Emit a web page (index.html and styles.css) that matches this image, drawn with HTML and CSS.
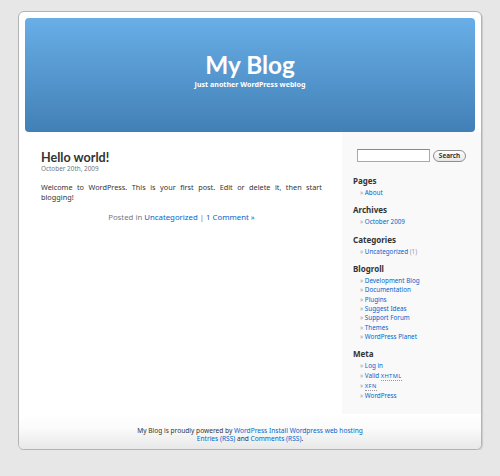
FILE: index.html
```html
<!DOCTYPE html>
<html lang="en">
<head>
<meta charset="utf-8">
<title>My Blog</title>
<link rel="stylesheet" href="styles.css">
</head>
<body>
<div class="page">
  <div class="header-wrap">
    <div class="header">
      <h1 class="site-title">My Blog</h1>
      <div class="site-desc">Just another WordPress weblog</div>
    </div>
  </div>
  <div class="content">
    <div class="main">
      <div class="post">
        <h2 class="post-title">Hello world!</h2>
        <div class="post-date">October 20th, 2009</div>
        <p class="entry">Welcome to WordPress. This is your first post. Edit or delete it, then start blogging!</p>
        <p class="postmeta">Posted in <a href="#">Uncategorized</a> | <a href="#">1 Comment »</a></p>
      </div>
    </div>
    <div class="sidebar">
      <form class="search">
        <input class="search-input" type="text">
        <button class="search-btn" type="button">Search</button>
      </form>
      <div class="widget">
        <h2 class="widget-title">Pages</h2>
        <ul class="links"><li><a href="#">About</a></li></ul>
      </div>
      <div class="widget">
        <h2 class="widget-title">Archives</h2>
        <ul class="links"><li><a href="#">October 2009</a></li></ul>
      </div>
      <div class="widget">
        <h2 class="widget-title">Categories</h2>
        <ul class="links"><li><a href="#">Uncategorized</a> <span class="count">(1)</span></li></ul>
      </div>
      <div class="widget">
        <h2 class="widget-title">Blogroll</h2>
        <ul class="links">
          <li><a href="#">Development Blog</a></li>
          <li><a href="#">Documentation</a></li>
          <li><a href="#">Plugins</a></li>
          <li><a href="#">Suggest Ideas</a></li>
          <li><a href="#">Support Forum</a></li>
          <li><a href="#">Themes</a></li>
          <li><a href="#">WordPress Planet</a></li>
        </ul>
      </div>
      <div class="widget">
        <h2 class="widget-title">Meta</h2>
        <ul class="links">
          <li><a href="#">Log in</a></li>
          <li><a href="#">Valid <abbr class="abbr">XHTML</abbr></a></li>
          <li><a href="#"><abbr class="abbr">XFN</abbr></a></li>
          <li><a href="#">WordPress</a></li>
        </ul>
      </div>
    </div>
  </div>
  <div class="footer">
    <p class="footer-text">My Blog is proudly powered by <a href="#">WordPress</a> <a href="#">Install Wordpress</a> <a href="#">web hosting</a><br><a href="#">Entries (RSS)</a> and <a href="#">Comments (RSS)</a>.</p>
  </div>
</div>
</body>
</html>
```
FILE: styles.css
```css
html, body {
  margin: 0;
  padding: 0;
}
body {
  background: #e7e7e7;
  font-family: "Noto Sans", "DejaVu Sans", sans-serif;
  color: #333;
  padding-top: 11px;
}
a {
  color: #0066cc;
  text-decoration: none;
}
.page {
  width: 464px;
  height: 439px;
  box-sizing: border-box;
  margin: 0 auto;
  background: #fff;
  border: 1px solid #b3b3b3;
  border-radius: 6px;
  box-shadow: 1px 1px 1px rgba(0, 0, 0, 0.12);
  display: flex;
  flex-direction: column;
  overflow: hidden;
}
.header-wrap {
  padding: 6px 6px 0;
}
.header {
  height: 114px;
  box-sizing: border-box;
  border-radius: 4px;
  background: linear-gradient(#69aee7, #4180b6);
  color: #fff;
  text-align: center;
  padding-top: 33px;
}
.site-title {
  margin: 0;
  font-family: Lato, "Liberation Sans", sans-serif;
  font-weight: bold;
  font-size: 24.4px;
  line-height: 28px;
}
.site-desc {
  margin-top: 1px;
  font-size: 7.1px;
  font-weight: bold;
  line-height: 9px;
}
.content {
  display: flex;
  height: 282px;
}
.main {
  width: 323px;
  box-sizing: border-box;
  padding: 18px 20px 0 22px;
}
.post-title {
  margin: 0;
  font-family: Lato, "Liberation Sans", sans-serif;
  font-weight: bold;
  font-size: 12.6px;
  line-height: 15px;
  color: #333;
}
.post-date {
  font-size: 6.4px;
  line-height: 7px;
  color: #777;
}
.entry {
  margin: 10px 0 0;
  font-size: 7.3px;
  line-height: 10px;
  text-align: justify;
}
.postmeta {
  margin: 10px 0 0;
  font-size: 7.8px;
  line-height: 10px;
  text-align: center;
  color: #777;
}
.sidebar {
  width: 139px;
  box-sizing: border-box;
  background: #f9f9f9;
  padding: 17px 0 0 11px;
}
.search {
  margin: 0 0 13px 4px;
  display: flex;
  align-items: center;
  gap: 3px;
}
.search-input {
  width: 73px;
  height: 13px;
  box-sizing: border-box;
  margin: 0;
  padding: 0;
  border: 1px solid #a9a9a9;
  border-top-color: #8a8a8a;
  background: #fff;
}
.search-btn {
  width: 33px;
  height: 12px;
  box-sizing: border-box;
  margin: 0;
  padding: 0;
  border: 1px solid #8e8e8e;
  border-radius: 6px;
  background: linear-gradient(#ffffff, #e6e6e6);
  font-family: "Noto Sans", sans-serif;
  font-size: 6.5px;
  font-weight: 600;
  line-height: 10px;
  color: #222;
}
.widget {
  margin-bottom: 7px;
}
.widget-title {
  margin: 0 0 1px;
  font-size: 8px;
  font-weight: bold;
  line-height: 12px;
  color: #333;
}
.links {
  list-style: none;
  margin: 0;
  padding: 0 0 0 7px;
}
.links li {
  font-size: 6.3px;
  line-height: 9.33px;
  color: #999;
}
.links li::before {
  content: "\00BB\00a0";
  color: #999;
}
.count {
  color: #999;
}
.abbr {
  font-size: 0.9em;
  letter-spacing: 0.07em;
  border-bottom: 1px dotted #999;
  text-decoration: none;
}
.footer {
  flex: 1;
  background: linear-gradient(#ffffff 0%, #fbfbfb 40%, #e8e8e8 100%);
}
.footer-text {
  margin: 0;
  padding-top: 13px;
  font-size: 6.6px;
  line-height: 8px;
  text-align: center;
  color: #333;
}
```
